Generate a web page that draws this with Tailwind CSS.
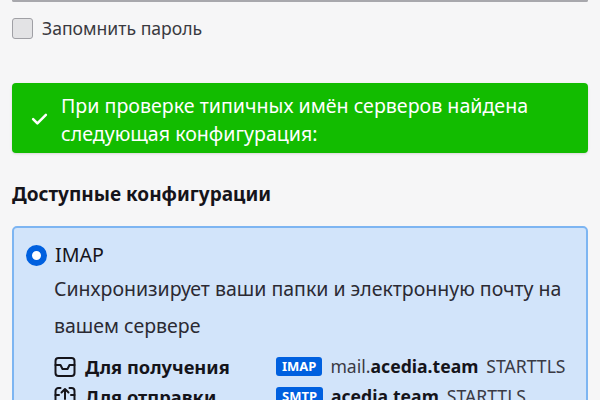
<!DOCTYPE html>
<html lang="ru">
<head>
    <meta charset="UTF-8">
    <title>Настройка учётной записи</title>
    <script src="https://cdn.jsdelivr.net/npm/@tailwindcss/browser@4"></script>
</head>
<body class="bg-[#f6f6f7] text-[#15141a] font-['Noto_Sans',sans-serif] w-[600px] h-[400px] overflow-hidden">
    <div class="px-3">
        <!-- password input, only its bottom edge is visible -->
        <div class="h-[2px] border-b-2 border-x-2 border-[#a8a8ad] rounded-b-[3px] bg-white"></div>

        <label class="flex items-center gap-[9px] mt-[16px] h-5 text-[17.6px] text-[#3a3a40]">
            <span class="w-[21px] h-[21px] rounded-[3px] border border-[#a0a0a5] bg-[#e3e3e5]"></span>
            Запомнить пароль
        </label>

        <!-- success banner -->
        <div class="flex items-center mt-[45px] h-[70px] rounded-[4px] bg-[#12bc00] text-white shadow-sm pl-[19px] pr-3">
            <svg class="w-[17px] h-[17px] shrink-0" viewBox="0 0 16 16" fill="none" stroke="white" stroke-width="2.4" stroke-linecap="round" stroke-linejoin="round">
                <path d="M2 8.5 6 12.5 14 4.5"/>
            </svg>
            <p class="ml-[13px] pt-[3px] text-[19.6px] leading-[28px]">При проверке типичных имён серверов найдена<br>следующая конфигурация:</p>
        </div>

        <h2 class="mt-[28px] text-[19px] leading-[26px] font-bold">Доступные конфигурации</h2>

        <!-- selected config card -->
        <div class="mt-[19px] rounded-[5px] border-2 border-[#7db5f2] bg-[#d2e4fa] pl-[12px] pr-[11px] pt-[12px] h-[200px]">
            <div class="flex items-center gap-[8px] h-[30px] text-[19.6px]">
                <span class="w-[21px] h-[21px] rounded-full border-[6px] border-[#0060df] bg-white"></span>
                IMAP
            </div>
            <div class="ml-[28px]">
                <p class="text-[19.5px] leading-[37px] text-[#2b2a33]">Синхронизирует ваши папки и электронную почту на<br>вашем сервере</p>

                <div class="grid grid-cols-[222px_1fr] gap-y-[5px] mt-[10px] text-[17.6px] leading-[25px]">
                    <div class="flex items-center gap-[9px] font-bold text-[18.3px]">
                        <svg class="w-[22px] h-[22px] shrink-0" viewBox="0 0 22 22" fill="none" stroke="#15141a" stroke-width="2" stroke-linecap="round" stroke-linejoin="round">
                            <rect x="1.5" y="2" width="19" height="18" rx="3"/>
                            <path d="M1.5 9H6.5L8.5 13H13.5L15.5 9H20.5"/>
                        </svg>
                        Для получения
                    </div>
                    <div class="flex items-center gap-[8px] text-[#3a3a44]">
                        <span class="bg-[#0060df] text-white text-[13px] leading-[19px] font-bold rounded-[3px] px-[6px]">IMAP</span>
                        <span>mail.<b class="text-[#15141a]">acedia.team</b></span>
                        <span>STARTTLS</span>
                    </div>
                    <div class="flex items-center gap-[9px] font-bold text-[18.3px]">
                        <svg class="w-[22px] h-[22px] shrink-0" viewBox="0 0 22 22" fill="none" stroke="#15141a" stroke-width="2" stroke-linecap="round" stroke-linejoin="round">
                            <path d="M6.5 2H4.5a3 3 0 0 0-3 3v12a3 3 0 0 0 3 3h13a3 3 0 0 0 3-3V5a3 3 0 0 0-3-3H15.5"/>
                            <path d="M1.5 9H5M20.5 9H17M11 13V3M7.5 6.5 11 3 14.5 6.5"/>
                        </svg>
                        Для отправки
                    </div>
                    <div class="flex items-center gap-[8px] text-[#3a3a44]">
                        <span class="bg-[#0060df] text-white text-[13px] leading-[19px] font-bold rounded-[3px] px-[6px]">SMTP</span>
                        <b class="text-[#15141a]">acedia.team</b>
                        <span>STARTTLS</span>
                    </div>
                </div>
            </div>
        </div>
    </div>
</body>
</html>
